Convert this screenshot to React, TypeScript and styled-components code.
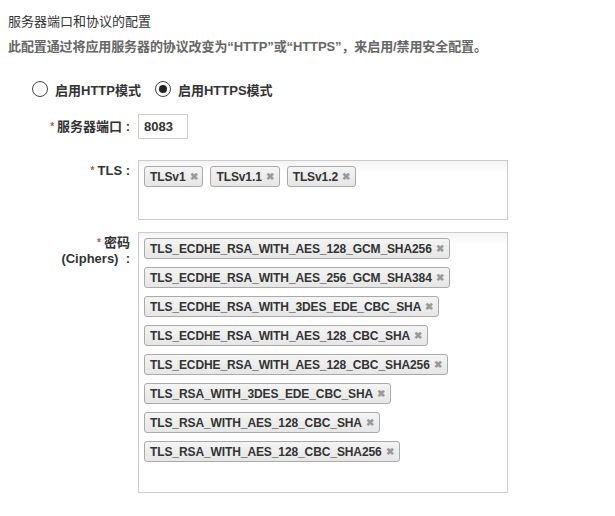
import React from 'react';
import styled, { createGlobalStyle } from 'styled-components';

const GlobalStyle = createGlobalStyle`
  body {
    margin: 0;
    background: #fff;
    font-family: 'Liberation Sans', 'Noto Sans CJK SC', Arial, sans-serif;
    color: #333;
  }
`;

const Page = styled.div`
  padding: 13px 8px 0 8px;
  width: 615px;
  box-sizing: border-box;
`;

const Title = styled.div`
  font-size: 13px;
  line-height: 18px;
  color: #333;
`;

const Desc = styled.div`
  margin-top: 7px;
  font-size: 13px;
  line-height: 18px;
  font-weight: bold;
  color: #666;
  letter-spacing: -0.1px;
`;

const RadioRow = styled.div`
  display: flex;
  align-items: center;
  gap: 14px;
  margin-top: 24px;
  padding-left: 24px;
  height: 18px;
`;

const RadioItem = styled.label`
  display: flex;
  align-items: center;
  gap: 7px;
  font-size: 13px;
  font-weight: bold;
  color: #333;
`;

const RadioCircle = styled.span<{ $checked?: boolean }>`
  width: 14px;
  height: 14px;
  border-radius: 50%;
  border: 1px solid #444;
  background: #fff;
  display: flex;
  align-items: center;
  justify-content: center;
  &::after {
    content: '';
    display: ${(p) => (p.$checked ? 'block' : 'none')};
    width: 8px;
    height: 8px;
    border-radius: 50%;
    background: #222;
  }
`;

const FormRow = styled.div<{ $top: number }>`
  display: grid;
  grid-template-columns: 130px 370px;
  margin-top: ${(p) => p.$top}px;
`;

const Label = styled.div<{ $pad?: number; $lh?: number }>`
  text-align: right;
  padding-right: 8px;
  padding-top: ${(p) => p.$pad ?? 0}px;
  font-size: 13px;
  font-weight: bold;
  color: #333;
  line-height: ${(p) => p.$lh ?? 16}px;
`;

const Star = styled.span`
  color: #c0504d;
  font-size: 10px;
  margin-right: 3px;
  vertical-align: 1px;
`;

const PortInput = styled.div`
  width: 50px;
  height: 25px;
  box-sizing: border-box;
  border: 1px solid #ccc;
  padding: 0 5px;
  font-size: 13px;
  font-weight: bold;
  line-height: 23px;
  color: #333;
`;

const TagBox = styled.div<{ $height: number }>`
  height: ${(p) => p.$height}px;
  box-sizing: border-box;
  border: 1px solid #ccc;
  padding: 5px 5px;
  display: flex;
  flex-wrap: wrap;
  align-content: flex-start;
  gap: 8px 7px;
  background: linear-gradient(#f4f4f4 0, #fff 12px);
`;

const Tag = styled.span`
  display: inline-flex;
  align-items: center;
  height: 21px;
  box-sizing: border-box;
  padding: 0 5px;
  border: 1px solid #aaa;
  border-radius: 3px;
  background: linear-gradient(#f4f4f4, #e6e6e6);
  font-size: 12px;
  font-weight: bold;
  letter-spacing: -0.1px;
  color: #333;
  white-space: nowrap;
`;

const Remove = styled.span`
  margin-left: 4px;
  color: #999;
  font-size: 10px;
  font-weight: bold;
`;

const tls = ['TLSv1', 'TLSv1.1', 'TLSv1.2'];
const ciphers = [
  'TLS_ECDHE_RSA_WITH_AES_128_GCM_SHA256',
  'TLS_ECDHE_RSA_WITH_AES_256_GCM_SHA384',
  'TLS_ECDHE_RSA_WITH_3DES_EDE_CBC_SHA',
  'TLS_ECDHE_RSA_WITH_AES_128_CBC_SHA',
  'TLS_ECDHE_RSA_WITH_AES_128_CBC_SHA256',
  'TLS_RSA_WITH_3DES_EDE_CBC_SHA',
  'TLS_RSA_WITH_AES_128_CBC_SHA',
  'TLS_RSA_WITH_AES_128_CBC_SHA256',
];

export default function App() {
  return (
    <>
      <GlobalStyle />
      <Page>
        <Title>服务器端口和协议的配置</Title>
        <Desc>此配置通过将应用服务器的协议改变为“HTTP”或“HTTPS”，来启用/禁用安全配置。</Desc>

        <RadioRow>
          <RadioItem>
            <RadioCircle />
            启用HTTP模式
          </RadioItem>
          <RadioItem>
            <RadioCircle $checked />
            启用HTTPS模式
          </RadioItem>
        </RadioRow>

        <FormRow $top={16}>
          <Label $lh={25}>
            <Star>*</Star>服务器端口 :
          </Label>
          <PortInput>8083</PortInput>
        </FormRow>

        <FormRow $top={21}>
          <Label $pad={3}>
            <Star>*</Star>TLS :
          </Label>
          <TagBox $height={60}>
            {tls.map((t) => (
              <Tag key={t}>
                {t}
                <Remove>✖</Remove>
              </Tag>
            ))}
          </TagBox>
        </FormRow>

        <FormRow $top={12}>
          <Label $pad={3}>
            <Star>*</Star>密码
            <br />
            (Ciphers)&nbsp;&nbsp;:
          </Label>
          <TagBox $height={261}>
            {ciphers.map((c) => (
              <Tag key={c}>
                {c}
                <Remove>✖</Remove>
              </Tag>
            ))}
          </TagBox>
        </FormRow>
      </Page>
    </>
  );
}
